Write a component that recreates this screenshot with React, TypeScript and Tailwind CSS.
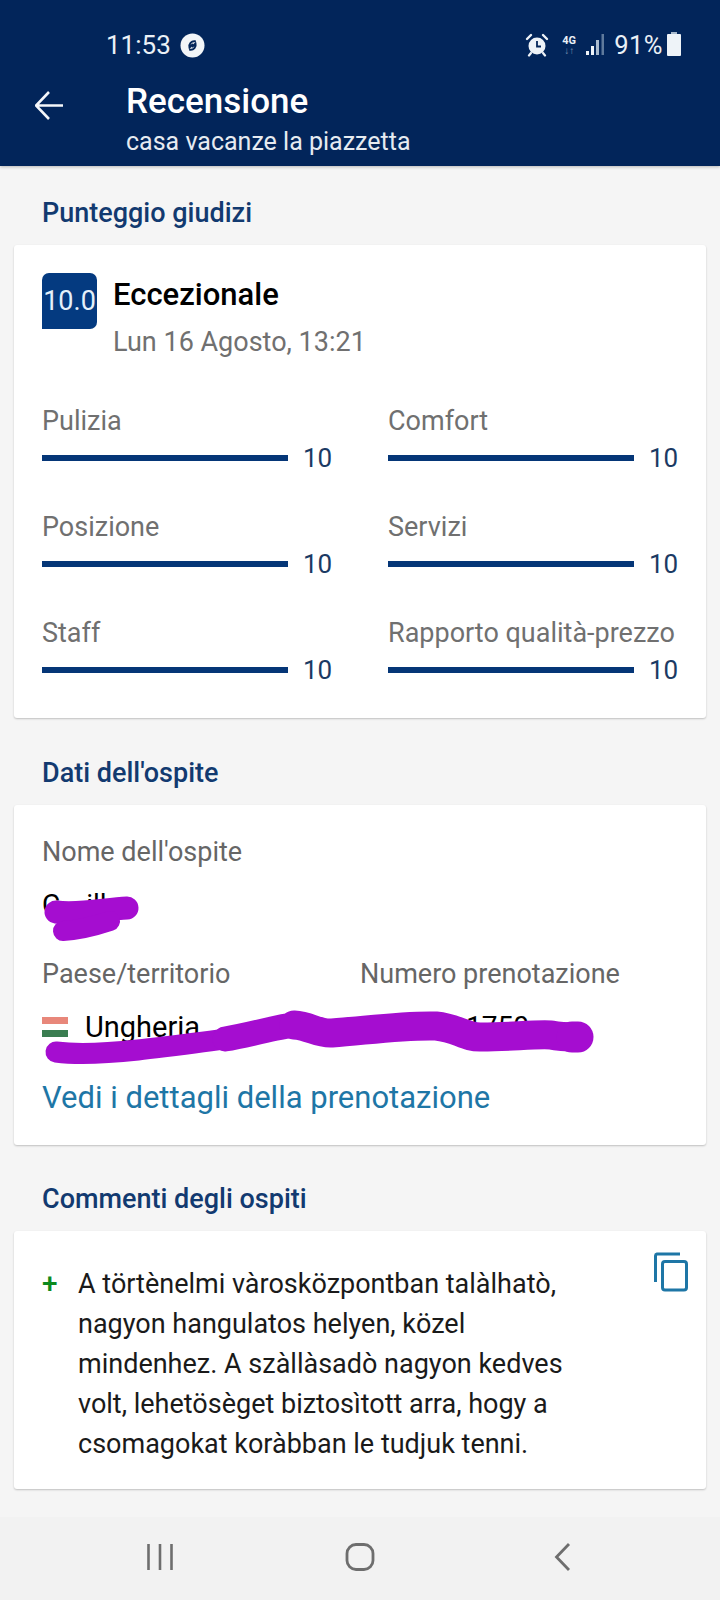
import React from 'react';

const scores = [
  { label: 'Pulizia' },
  { label: 'Comfort' },
  { label: 'Posizione' },
  { label: 'Servizi' },
  { label: 'Staff' },
  { label: 'Rapporto qualità-prezzo' },
];

const SectionTitle = ({ text, top }: { text: string; top: string }) => (
  <h2 className={`${top} mb-[17px] ml-[42px] text-[27px] leading-[30px] font-medium text-[#123a70]`}>{text}</h2>
);

const Card = ({ className, children }: { className: string; children: React.ReactNode }) => (
  <div className={`mx-[14px] w-[692px] rounded-[3px] bg-white shadow-[0_1px_2px_rgba(0,0,0,0.22)] ${className}`}>{children}</div>
);

const AlarmIcon = () => (
  <svg width="24" height="24" viewBox="0 0 24 24" fill="none">
    <circle cx="12" cy="13" r="8.500" fill="#eef3f8" />
    <path d="M12 8v5.500h4" stroke="#03265a" strokeWidth="1.800" fill="none" />
    <path d="M2 6l4-4M22 6l-4-4" stroke="#eef3f8" strokeWidth="2.400" strokeLinecap="round" />
    <path d="M6 20l-2 2.500M18 20l2 2.500" stroke="#eef3f8" strokeWidth="2.200" strokeLinecap="round" />
  </svg>
);

const ShazamIcon = () => (
  <svg width="25" height="25" viewBox="0 0 25 25" fill="none">
    <circle cx="12.500" cy="12.500" r="12" fill="#f2f5f8" />
    <path d="M15 8.200A5 5 0 0 0 9.500 14.500L12.500 11.500" stroke="#03265a" strokeWidth="2" strokeLinecap="round" />
    <path d="M10 16.800A5 5 0 0 0 15.500 10.500L12.500 13.500" stroke="#03265a" strokeWidth="2" strokeLinecap="round" />
  </svg>
);

const SignalIcon = () => (
  <svg width="19" height="22" viewBox="0 0 19 22">
    <rect x="0" y="17" width="3" height="4" fill="#eef3f8" />
    <rect x="5" y="12" width="3" height="9" fill="#eef3f8" />
    <rect x="10" y="6" width="3" height="15" fill="#a9bacd" />
    <rect x="15.500" y="0" width="2.500" height="21" fill="#5f7a9c" />
  </svg>
);

const App = () => {
  return (
    <div className="relative flex h-[1600px] w-[720px] flex-col overflow-hidden bg-[#f5f5f5] font-['Roboto',sans-serif]">
      {/* HEADER */}
      <div className="relative z-10 h-[166px] bg-[#02255a] shadow-[0_1px_3px_rgba(0,0,0,0.25)]">
        <div className="mt-[30px] flex h-[30px] items-center pr-[39px] pl-[106px] text-[26px] text-[#eaf0f6]">
          <span className="w-[74px]">11:53</span>
          <ShazamIcon />
          <div className="ml-auto flex items-center">
            <AlarmIcon />
            <div className="ml-[12px] flex w-[16px] flex-col items-center">
              <span className="text-[11px] leading-[11px] font-bold">4G</span>
              <span className="text-[10px] leading-[9px] font-bold text-[#7f96b3]">↓↑</span>
            </div>
            <div className="ml-[9px]"><SignalIcon /></div>
            <span className="ml-[9px] text-[25.5px] tracking-[0.5px]">91%</span>
            <div className="relative ml-[4px] h-[22px] w-[14px] rounded-[1px] bg-[#eef3f8]">
              <div className="absolute top-[-2px] left-[4px] h-[2px] w-[6px] bg-[#a9bacd]" />
            </div>
          </div>
        </div>
        <div className="flex items-center pl-[35px]">
          <svg width="29" height="29" viewBox="0 0 29 29" fill="none" className="-mt-[7px] mr-[62px]">
            <path d="M1 14.500h27M14 1L1 14.500L14 28" stroke="#f5f7fa" strokeWidth="2.600" />
          </svg>
          <div className="text-white">
            <div className="mt-[24px] text-[35px] leading-[36px] font-medium">Recensione</div>
            <div className="mt-[7px] text-[25px] leading-[30px] text-[#e6ebf1]">casa vacanze la piazzetta</div>
          </div>
        </div>
      </div>

      {/* PUNTEGGIO */}
      <SectionTitle text="Punteggio giudizi" top="mt-[32px]" />
      <Card className="px-[28px] pt-[28px] pb-[33px]">
        <div className="flex gap-[16px]">
          <div className="flex h-[56px] w-[55px] items-center justify-center rounded-t-[7px] rounded-br-[7px] bg-[#043a80] text-[27px] text-[#e4f0fa]">10.0</div>
          <div>
            <div className="mt-[7px] text-[31px] leading-[30px] font-medium text-black">Eccezionale</div>
            <div className="mt-[17px] text-[27px] leading-[30px] text-[#707070]">Lun 16 Agosto, 13:21</div>
          </div>
        </div>
        <div className="mt-[49px] grid grid-cols-[346px_1fr] gap-y-[39px]">
          {scores.map(s => (
            <div key={s.label}>
              <div className="text-[27px] leading-[30px] text-[#707070]">{s.label}</div>
              <div className="mt-[7px] flex h-[30px] items-center">
                <div className="h-[6px] w-[246px] bg-[#053677]" />
                <span className="ml-[15px] text-[26px] text-[#1b3a63]">10</span>
              </div>
            </div>
          ))}
        </div>
      </Card>

      {/* DATI OSPITE */}
      <SectionTitle text="Dati dell'ospite" top="mt-[40px]" />
      <Card className="px-[28px] pt-[32px] pb-[32px]">
        <div className="text-[27px] leading-[30px] text-[#666666]">Nome dell'ospite</div>
        {/* solo i pezzi che si vedono sopra la cancellatura */}
        <div className="mt-[23px] flex text-[28px] leading-[30px] text-black">
          <span>C</span>
          <span className="ml-[26px]">ill</span>
        </div>
        <div className="mt-[39px] grid grid-cols-[318px_1fr] text-[27px] leading-[30px] text-[#666666]">
          <div>Paese/territorio</div>
          <div>Numero prenotazione</div>
        </div>
        <div className="mt-[23px] grid grid-cols-[318px_1fr] text-[29px] leading-[30px] text-black">
          <div className="flex items-center">
            <div className="mr-[17px] flex h-[20px] w-[26px] flex-col">
              <div className="flex-1 bg-[#e8877a]" />
              <div className="flex-1 bg-white" />
              <div className="flex-1 bg-[#3a7d50]" />
            </div>
            Ungheria
          </div>
          <div className="pl-[106px] text-[28px]">1750</div>
        </div>
        <div className="mt-[41px] text-[31px] leading-[30px] text-[#1e76a6]">Vedi i dettagli della prenotazione</div>
      </Card>

      {/* COMMENTI */}
      <SectionTitle text="Commenti degli ospiti" top="mt-[39px]" />
      <Card className="flex pt-[33px] pr-[18px] pb-[25px] pl-[28px]">
        <div className="w-[36px] text-[28px] leading-[40px] font-medium text-[#0c8a1e]">+</div>
        <p className="w-[510px] text-[27px] leading-[40px] text-[#1a1a1a]">
          A törtènelmi vàrosközpontban talàlhatò, nagyon hangulatos helyen, közel mindenhez. A szàllàsadò nagyon kedves volt, lehetösèget biztosìtott arra, hogy a csomagokat koràbban le tudjuk tenni.
        </p>
        <svg width="34" height="40" viewBox="0 0 34 40" fill="none" className="-mt-[12px] ml-auto">
          <path d="M26 2H3a2 2 0 0 0-1.500 2v26" stroke="#1e76a6" strokeWidth="3" />
          <rect x="8.500" y="9.500" width="24" height="28.500" rx="2.500" stroke="#1e76a6" strokeWidth="3" />
        </svg>
      </Card>

      {/* NAV */}
      <div className="mt-auto flex h-[83px] justify-between bg-[#f2f2f2] px-[140px] pt-[26px]">
        <svg width="40" height="28" viewBox="0 0 40 28" fill="none" stroke="#6e6e6e" strokeWidth="2.600">
          <path d="M8.500 1v26M20 1v26M31.500 1v26" />
        </svg>
        <svg width="40" height="28" viewBox="0 0 40 28" fill="none" stroke="#6e6e6e" strokeWidth="2.800">
          <rect x="7" y="1.500" width="26" height="25" rx="9" />
        </svg>
        <svg width="40" height="28" viewBox="0 0 40 28" fill="none" stroke="#6e6e6e" strokeWidth="2.800">
          <path d="M29 1L16.500 14L29 27" />
        </svg>
      </div>

      {/* scarabocchi sopra i dati */}
      <svg width="720" height="1600" viewBox="0 0 720 1600" fill="none" className="pointer-events-none absolute top-0 left-0 z-20">
        <g stroke="#a50dd0" strokeLinecap="round" strokeLinejoin="round">
          <path d="M56 912C80 915 105 909 127 908" strokeWidth="23" />
          <path d="M63 931C80 930 95 926 110 921" strokeWidth="20" />
          <path d="M56 1052C80 1055 110 1053 138 1050C170 1046 200 1043 230 1038" strokeWidth="21" />
          <path d="M225 1039C250 1035 275 1027 294 1025" strokeWidth="25" />
          <path d="M294 1025C310 1026 318 1034 332 1033C370 1030 405 1025 436 1026C458 1028 465 1038 482 1037C510 1037 535 1034 551 1035C560 1037 565 1037 578 1037" strokeWidth="29" />
          <path d="M572 1037L578 1037" strokeWidth="31" />
        </g>
      </svg>
    </div>
  );
};

export default App;
